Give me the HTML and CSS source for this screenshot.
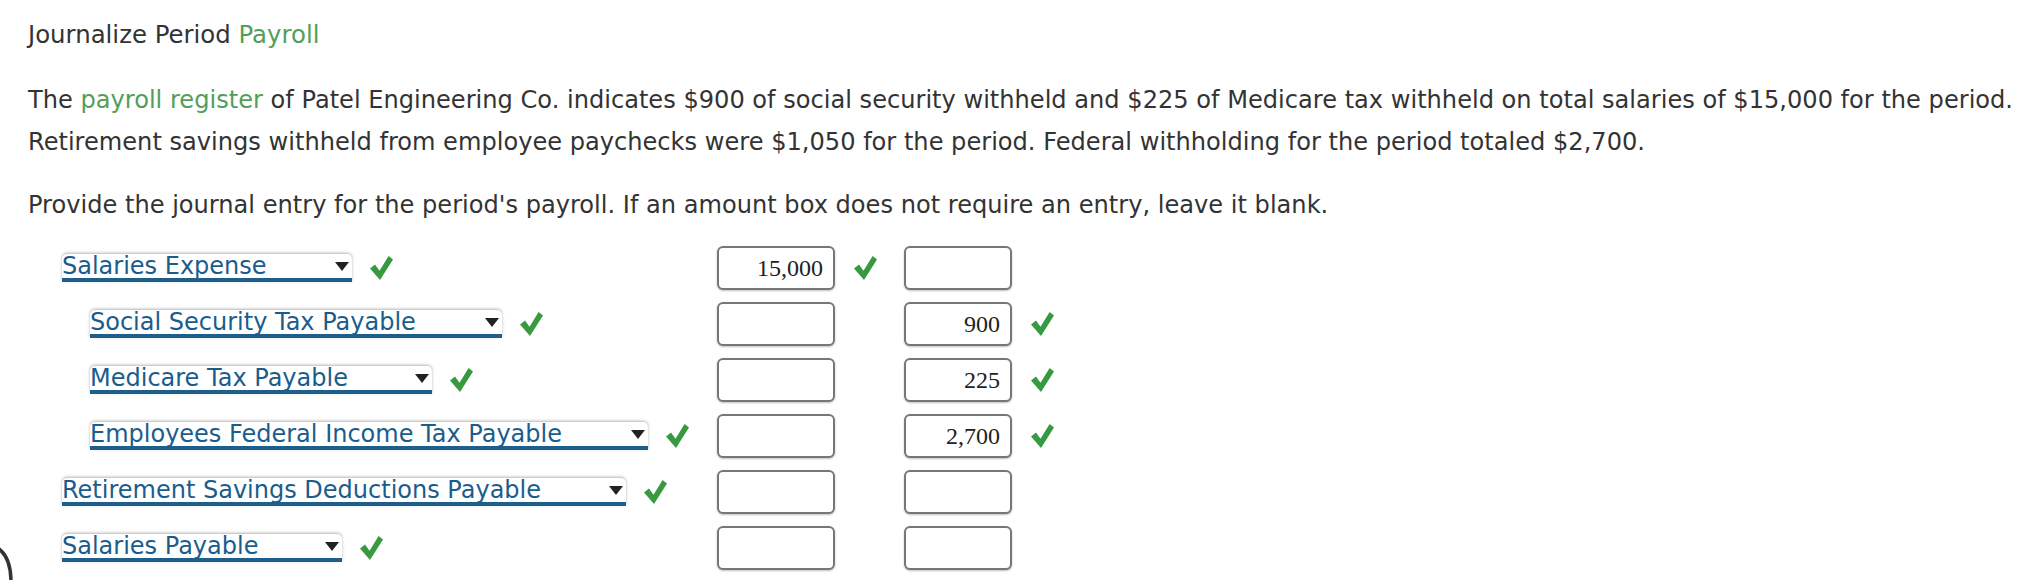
FILE: index.html
```html
<!DOCTYPE html>
<html lang="en">
<head>
<meta charset="utf-8">
<title>Journalize Period Payroll</title>
<link rel="stylesheet" href="styles.css">
</head>
<body>
<div class="page">
  <h1 class="title">Journalize Period <span class="hl">Payroll</span></h1>
  <p class="para">The <span class="hl">payroll register</span> of Patel Engineering Co. indicates $900 of social security withheld and $225 of Medicare tax withheld on total salaries of $15,000 for the period.<br>Retirement savings withheld from employee paychecks were $1,050 for the period. Federal withholding for the period totaled $2,700.</p>
  <p class="prompt">Provide the journal entry for the period's payroll. If an amount box does not require an entry, leave it blank.</p>

  <div class="journal">
    <div class="row">
      <div class="acct">
        <div class="select w-se"><span class="sel-text">Salaries Expense</span><i class="arrow"></i></div>
        <svg class="check" viewBox="0 0 23 24"><path d="M0 12.5 L5 8.5 L9.5 14.8 L18.6 0 L23 3.4 L10 24 Z"/></svg>
      </div>
      <div class="amt amt-dr">15,000</div>
      <div class="mark"><svg class="check" viewBox="0 0 23 24"><path d="M0 12.5 L5 8.5 L9.5 14.8 L18.6 0 L23 3.4 L10 24 Z"/></svg></div>
      <div class="amt amt-cr"></div>
      <div class="mark"></div>
    </div>

    <div class="row">
      <div class="acct indent">
        <div class="select w-sst"><span class="sel-text">Social Security Tax Payable</span><i class="arrow"></i></div>
        <svg class="check" viewBox="0 0 23 24"><path d="M0 12.5 L5 8.5 L9.5 14.8 L18.6 0 L23 3.4 L10 24 Z"/></svg>
      </div>
      <div class="amt amt-dr"></div>
      <div class="mark"></div>
      <div class="amt amt-cr">900</div>
      <div class="mark"><svg class="check" viewBox="0 0 23 24"><path d="M0 12.5 L5 8.5 L9.5 14.8 L18.6 0 L23 3.4 L10 24 Z"/></svg></div>
    </div>

    <div class="row">
      <div class="acct indent">
        <div class="select w-mtp"><span class="sel-text">Medicare Tax Payable</span><i class="arrow"></i></div>
        <svg class="check" viewBox="0 0 23 24"><path d="M0 12.5 L5 8.5 L9.5 14.8 L18.6 0 L23 3.4 L10 24 Z"/></svg>
      </div>
      <div class="amt amt-dr"></div>
      <div class="mark"></div>
      <div class="amt amt-cr">225</div>
      <div class="mark"><svg class="check" viewBox="0 0 23 24"><path d="M0 12.5 L5 8.5 L9.5 14.8 L18.6 0 L23 3.4 L10 24 Z"/></svg></div>
    </div>

    <div class="row">
      <div class="acct indent">
        <div class="select w-efit"><span class="sel-text">Employees Federal Income Tax Payable</span><i class="arrow"></i></div>
        <svg class="check" viewBox="0 0 23 24"><path d="M0 12.5 L5 8.5 L9.5 14.8 L18.6 0 L23 3.4 L10 24 Z"/></svg>
      </div>
      <div class="amt amt-dr"></div>
      <div class="mark"></div>
      <div class="amt amt-cr">2,700</div>
      <div class="mark"><svg class="check" viewBox="0 0 23 24"><path d="M0 12.5 L5 8.5 L9.5 14.8 L18.6 0 L23 3.4 L10 24 Z"/></svg></div>
    </div>

    <div class="row">
      <div class="acct">
        <div class="select w-rsd"><span class="sel-text">Retirement Savings Deductions Payable</span><i class="arrow"></i></div>
        <svg class="check" viewBox="0 0 23 24"><path d="M0 12.5 L5 8.5 L9.5 14.8 L18.6 0 L23 3.4 L10 24 Z"/></svg>
      </div>
      <div class="amt amt-dr"></div>
      <div class="mark"></div>
      <div class="amt amt-cr"></div>
      <div class="mark"></div>
    </div>

    <div class="row">
      <div class="acct">
        <div class="select w-sp"><span class="sel-text">Salaries Payable</span><i class="arrow"></i></div>
        <svg class="check" viewBox="0 0 23 24"><path d="M0 12.5 L5 8.5 L9.5 14.8 L18.6 0 L23 3.4 L10 24 Z"/></svg>
      </div>
      <div class="amt amt-dr"></div>
      <div class="mark"></div>
      <div class="amt amt-cr"></div>
      <div class="mark"></div>
    </div>
  </div>

  <svg class="corner-arc" viewBox="0 0 20 34" width="20" height="34"><path d="M-1 3 C7 9 11 19 11 36" fill="none" stroke="#333" stroke-width="3.5"/></svg>
</div>
</body>
</html>
```

FILE: styles.css
```css
html, body {
  margin: 0;
  padding: 0;
  background: #ffffff;
}

body {
  font-family: "DejaVu Sans", Verdana, sans-serif;
  font-size: 24.1px;
  color: #333333;
}

.page {
  position: relative;
  height: 580px;
  box-sizing: border-box;
  padding: 16px 0 0 28px;
  overflow: hidden;
}

.title {
  margin: 0;
  font-size: 24.4px;
  font-weight: normal;
  line-height: 38px;
}

.hl {
  color: #529e5b;
}

.para {
  margin: 25px 0 0;
  line-height: 42px;
  white-space: nowrap;
}

.prompt {
  margin: 23px 0 0;
  line-height: 38px;
  white-space: nowrap;
}

.journal {
  margin: 22px 0 0 -28px;
  display: flex;
  flex-direction: column;
  gap: 12px;
}

.row {
  display: flex;
  align-items: center;
  height: 44px;
}

.acct {
  width: 717px;
  box-sizing: border-box;
  padding-left: 62px;
  display: flex;
  align-items: center;
  gap: 18px;
}

.acct.indent {
  padding-left: 90px;
}

.select {
  box-sizing: border-box;
  height: 28px;
  display: flex;
  align-items: flex-start;
  justify-content: space-between;
  background: #ffffff;
  border-bottom: 4px solid #1d5e8b;
  border-radius: 5px 5px 0 0;
  box-shadow: 0 -1px 3px rgba(0, 0, 0, 0.3);
}

.sel-text {
  font-size: 24px;
  line-height: 24px;
  color: #1a5d8d;
  white-space: nowrap;
}

.arrow {
  display: block;
  width: 0;
  height: 0;
  margin: 8px 3px 0 0;
  border-left: 7px solid transparent;
  border-right: 7px solid transparent;
  border-top: 9px solid #222222;
}

.w-se { width: 290px; }
.w-sst { width: 412px; }
.w-mtp { width: 342px; }
.w-efit { width: 558px; }
.w-rsd { width: 564px; }
.w-sp { width: 280px; }

.check {
  display: block;
  width: 23px;
  height: 24px;
  flex: none;
  fill: #389a40;
}

.amt {
  box-sizing: border-box;
  height: 44px;
  border: 2px solid #777777;
  border-radius: 6px;
  box-shadow: 0 1px 2px rgba(0, 0, 0, 0.25);
  background: #ffffff;
  font-family: "Liberation Serif", "Times New Roman", serif;
  font-size: 24px;
  line-height: 40px;
  color: #222222;
  text-align: right;
  padding-right: 10px;
}

.amt-dr { width: 118px; }
.amt-cr { width: 108px; }

.mark {
  width: 69px;
  padding-left: 19px;
  box-sizing: border-box;
}

.corner-arc {
  position: absolute;
  left: 0;
  bottom: 0;
}
```
